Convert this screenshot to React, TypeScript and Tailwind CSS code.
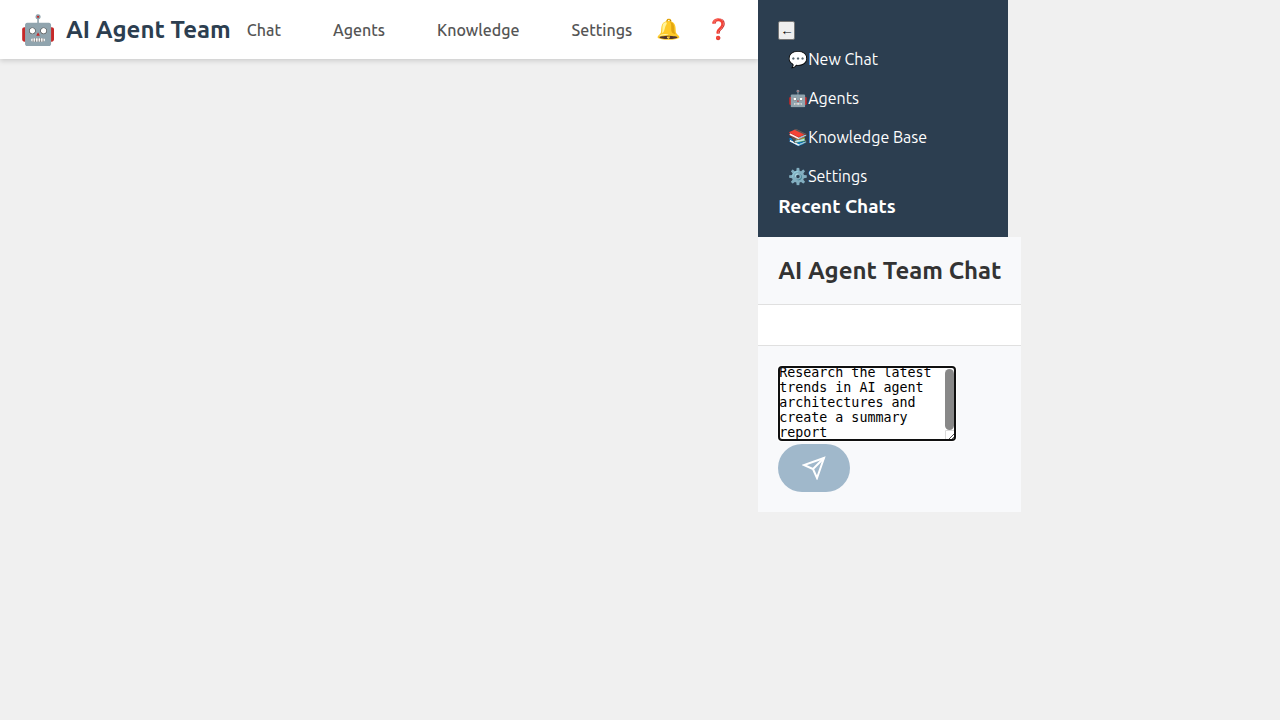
import { useEffect, useRef, useState } from 'react';

const navLinks = ['Chat', 'Agents', 'Knowledge', 'Settings'];

const sideLinks = [
  { icon: '💬', label: 'New Chat' },
  { icon: '🤖', label: 'Agents' },
  { icon: '📚', label: 'Knowledge Base' },
  { icon: '⚙️', label: 'Settings' },
];

function Header() {
  return (
    <header className="flex h-[59px] shrink-0 items-center bg-white pr-[19px] pl-5 shadow-[0_2px_5px_rgba(0,0,0,0.15)]">
      <div className="flex items-center gap-2.5">
        <span className="pb-0.5 text-[29px] leading-8">🤖</span>
        <h1 className="text-2xl leading-7 font-semibold text-[#2c3e50]">AI Agent Team</h1>
      </div>
      <nav className="flex gap-5">
        {navLinks.map((label) => (
          <a key={label} href="#" className="px-4 text-base leading-5 font-medium text-[#555]">
            {label}
          </a>
        ))}
      </nav>
      <div className="flex gap-[9px] pb-0.5 text-xl leading-6">
        <button aria-label="Notifications" className="px-2">🔔</button>
        <button aria-label="Help" className="px-2">❓</button>
      </div>
    </header>
  );
}

function Sidebar() {
  return (
    <aside className="w-[250px] bg-[#2c3e50] px-5 pt-[21px] pb-5 text-white">
      <button
        aria-label="Collapse sidebar"
        className="block h-[19px] rounded-[2px] border border-[#767676] bg-[#efefef] px-px text-black [font:revert]"
      >
        ←
      </button>
      <ul>
        {sideLinks.map(({ icon, label }) => (
          <li key={label}>
            <a href="#" className="flex items-center p-2.5 text-base leading-[19px] text-white">
              <span>{icon}</span>
              {label}
            </a>
          </li>
        ))}
      </ul>
      <h3 className="text-[19px] leading-[21px] font-semibold">Recent Chats</h3>
    </aside>
  );
}

function SendIcon() {
  return (
    <svg width="24" height="24" viewBox="0 0 24 24" fill="none" stroke="currentColor" strokeWidth="2" aria-hidden="true">
      <path d="M22 2L11 13" />
      <path d="M22 2L15 22L11 13L2 9L22 2Z" />
    </svg>
  );
}

function MessageBox() {
  const [text, setText] = useState(
    'Research the latest trends in AI agent architectures and create a summary report',
  );
  const [thumb, setThumb] = useState({ top: 0, size: 100 });
  const box = useRef<HTMLTextAreaElement>(null);

  const measure = () => {
    const el = box.current;
    if (!el) return;
    setThumb({
      top: (el.scrollTop / el.scrollHeight) * 100,
      size: (el.clientHeight / el.scrollHeight) * 100,
    });
  };

  useEffect(() => {
    const el = box.current;
    if (!el) return;
    el.focus();
    el.scrollTop = el.scrollHeight;
    measure();
  }, [text]);

  return (
    <div className="relative">
      <textarea
        ref={box}
        aria-label="Message"
        value={text}
        onChange={(e) => setText(e.target.value)}
        onScroll={measure}
        className="block h-[75px] w-[178px] resize-none border border-[#767676] bg-white pr-2.5 text-black [font:revert] [scrollbar-width:none]"
      />
      <div className="pointer-events-none absolute top-px right-0.5 bottom-0.5 flex w-[9px] flex-col">
        <div className="relative grow">
          <div
            className="absolute w-full rounded-[5px] bg-[#888]"
            style={{ top: `${thumb.top}%`, height: `${thumb.size}%` }}
          />
        </div>
        <svg width="9" height="9" viewBox="0 0 9 9" fill="none" aria-hidden="true">
          <path d="M0.5 9V0.5H9" stroke="#d9d9d9" />
          <path d="M4 9L9 4M7 9L9 7" stroke="#555" />
        </svg>
      </div>
    </div>
  );
}

function ChatPanel() {
  return (
    <main className="w-fit bg-white">
      <div className="border-b border-[#e0e0e0] bg-[#f8f9fb] p-5">
        <h2 className="text-2xl leading-[27px] font-semibold text-[#333]">AI Agent Team Chat</h2>
      </div>
      <div className="p-5" />
      <form
        className="flex flex-col items-start gap-[3px] border-t border-[#e0e0e0] bg-[#f8f9fb] p-5"
        onSubmit={(e) => e.preventDefault()}
      >
        <MessageBox />
        <button aria-label="Send" className="rounded-3xl bg-[#a0b8cb] px-6 py-3 text-white">
          <SendIcon />
        </button>
      </form>
    </main>
  );
}

export default function App() {
  return (
    <div className="flex min-h-screen items-start bg-[#f0f0f0] font-['Ubuntu','Open_Sans',sans-serif]">
      <Header />
      <div>
        <Sidebar />
        <ChatPanel />
      </div>
    </div>
  );
}
